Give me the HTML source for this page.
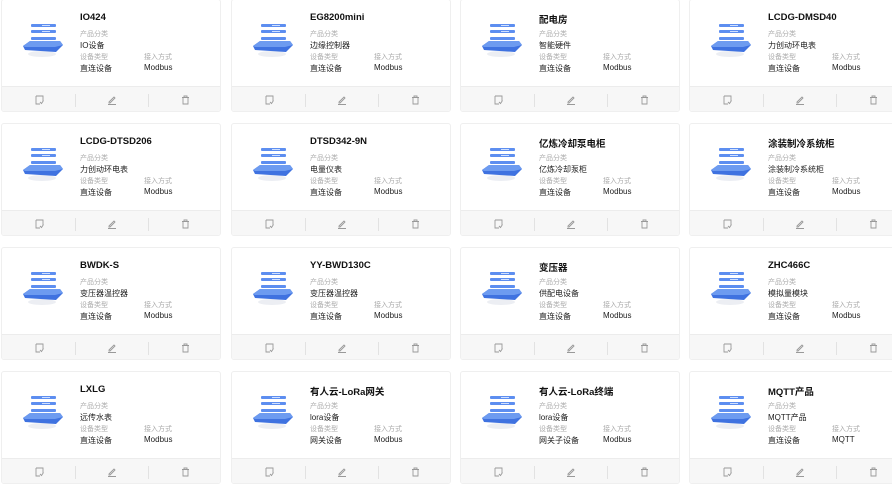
<!DOCTYPE html>
<html><head><meta charset="utf-8"><style>
body{margin:0;width:892px;height:480px;overflow:hidden;background:#fff;font-family:"Liberation Sans","Noto Sans CJK SC",sans-serif;position:relative}
.c{position:absolute;width:220px;height:113px;border:1px solid #efefef;border-radius:3px;box-sizing:border-box;background:#fff;overflow:hidden}
.ic{position:absolute;left:18px;top:22px}
.t{position:absolute;left:78px;top:12px;font-size:9.5px;color:#111;font-weight:bold;white-space:nowrap}
.l{position:absolute;font-size:7px;color:#aaa;white-space:nowrap}
.v{position:absolute;font-size:8px;color:#222;white-space:nowrap}
.f{position:absolute;left:0;right:0;top:86px;height:27px;background:#f7f7f7;border-top:1px solid #ececec}
.s{position:absolute;top:7px;width:1px;height:13px;background:#e2e2e2}
.fi{position:absolute;top:8px}
</style></head><body>
<script>
const d=[["IO424","IO设备","直连设备","Modbus"],["EG8200mini","边缘控制器","直连设备","Modbus"],["配电房","智能硬件","直连设备","Modbus"],["LCDG-DMSD40","力创动环电表","直连设备","Modbus"],
["LCDG-DTSD206","力创动环电表","直连设备","Modbus"],["DTSD342-9N","电量仪表","直连设备","Modbus"],["亿炼冷却泵电柜","亿炼冷却泵柜","直连设备","Modbus"],["涂装制冷系统柜","涂装制冷系统柜","直连设备","Modbus"],
["BWDK-S","变压器温控器","直连设备","Modbus"],["YY-BWD130C","变压器温控器","直连设备","Modbus"],["变压器","供配电设备","直连设备","Modbus"],["ZHC466C","模拟量模块","直连设备","Modbus"],
["LXLG","远传水表","直连设备","Modbus"],["有人云-LoRa网关","lora设备","网关设备","Modbus"],["有人云-LoRa终端","lora设备","网关子设备","Modbus"],["MQTT产品","MQTT产品","直连设备","MQTT"]];
const icon=`<svg class="ic" width="46" height="36" viewBox="0 0 46 36"><ellipse cx="22" cy="32" rx="14" ry="3" fill="#eceef3"/><path d="M3 24 L10 19 L40 19 L43 23 L36 30 L5 28 Z" fill="#3f72e0"/><path d="M3 24 L10 19 L40 19 L43 23 L35 25 L5 25Z" fill="#6d9bf0"/><rect x="11" y="2" width="25" height="3" rx="1" fill="#5d8ef0"/><rect x="11" y="8" width="25" height="3" rx="1" fill="#5d8ef0"/><rect x="11" y="15" width="25" height="3" rx="1" fill="#5d8ef0"/><rect x="22" y="3" width="8" height="1" fill="#cfe0ff"/><rect x="22" y="9" width="8" height="1" fill="#cfe0ff"/></svg>`;
const fic=`<svg class="fi" style="left:33px" width="9" height="10" viewBox="0 0 9 10"><path d="M1 1h7v5M1 1v8h4M5 7l1.5 1.5 2-3" fill="none" stroke="#999" stroke-width=".9"/></svg><div class="s" style="left:73px"></div><svg class="fi" style="left:105px" width="10" height="10" viewBox="0 0 10 10"><path d="M2 7l5-5 1 1-5 5H2zM1 9.5h8" fill="none" stroke="#999" stroke-width=".9"/></svg><div class="s" style="left:146px"></div><svg class="fi" style="left:179px" width="9" height="10" viewBox="0 0 9 10"><path d="M1 2.5h7M3 2.5V1h3v1.5M2 2.5v6.5h5V2.5" fill="none" stroke="#999" stroke-width=".9"/></svg>`;
let h="";
d.forEach((x,i)=>{const col=i%4,row=Math.floor(i/4);const L=[1,231,460,689][col],T=-1+row*124;
h+=`<div class="c" style="left:${L}px;top:${T}px">${icon}<div class="t">${x[0]}</div><div class="l" style="left:78px;top:29px">产品分类</div><div class="v" style="left:78px;top:40px">${x[1]}</div><div class="l" style="left:78px;top:52px">设备类型</div><div class="l" style="left:142px;top:52px">接入方式</div><div class="v" style="left:78px;top:63px">${x[2]}</div><div class="v" style="left:142px;top:63px">${x[3]}</div><div class="f">${fic}</div></div>`;});
document.body.innerHTML=h;
</script>
</body></html>
